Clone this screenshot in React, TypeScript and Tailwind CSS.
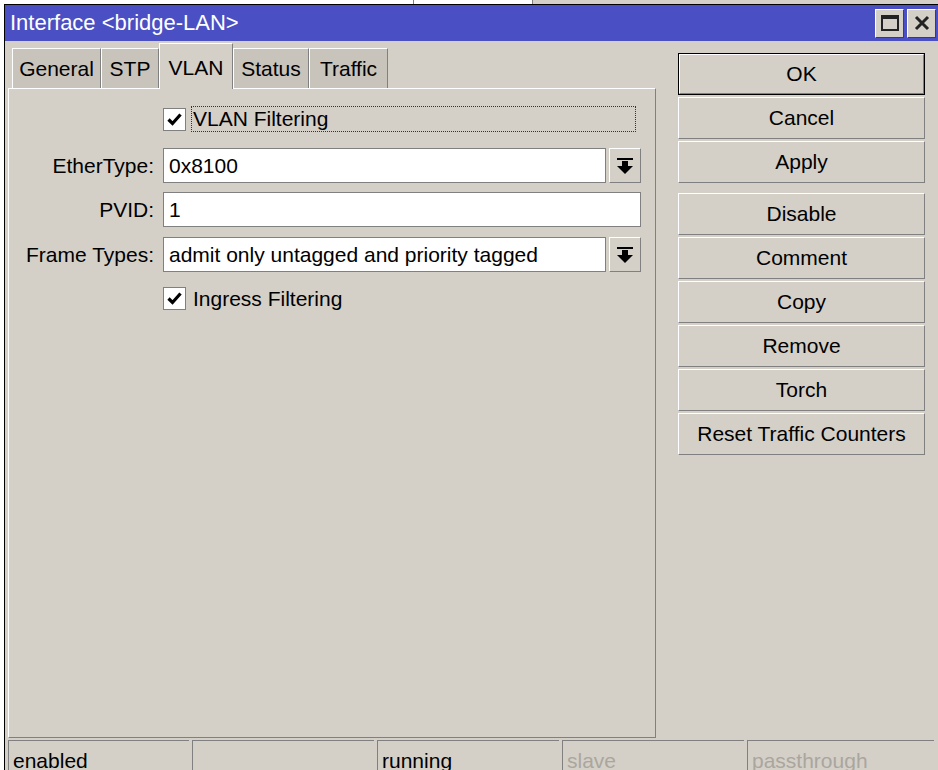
import React from "react";

const font = { fontFamily: '"Liberation Sans", Arial, sans-serif' };

const tabs = [
  { name: "General", w: "w-[89px]" },
  { name: "STP", w: "w-[58px]" },
  { name: "VLAN", w: "w-[74px]" },
  { name: "Status", w: "w-[76px]" },
  { name: "Traffic", w: "w-[79px]" },
];

const buttons = [
  ["OK", "Cancel", "Apply"],
  ["Disable", "Comment", "Copy", "Remove", "Torch", "Reset Traffic Counters"],
];

const statusCells = [
  { text: "enabled", dim: false, w: "w-[181px]" },
  { text: "", dim: false, w: "w-[182px]" },
  { text: "running", dim: false, w: "w-[182px]" },
  { text: "slave", dim: true, w: "w-[182px]" },
  { text: "passthrough", dim: true, w: "w-[187px]" },
];

const Check = () => (
  <span className="flex items-center justify-center w-[23px] h-[23px] bg-white border border-[#808080] shrink-0">
    <svg width="17" height="17" viewBox="0 0 17 17">
      <path d="M2.5 8.5 L6.5 12.5 L14.5 3.5" stroke="#000" strokeWidth="3.2" fill="none" />
    </svg>
  </span>
);

const DropButton = () => (
  <span className="flex items-center justify-center w-[32px] h-[35px] ml-[3px] bg-[#d4d0c8] border border-t-white border-l-white border-r-[#808080] border-b-[#808080] shrink-0">
    <svg width="16" height="16" viewBox="0 0 16 16">
      <rect x="0" y="0" width="16" height="2" fill="#000" />
      <rect x="5" y="3" width="6" height="5" fill="#000" />
      <polygon points="0,8 16,8 8,16" fill="#000" />
    </svg>
  </span>
);

const Field = ({ label, value, drop, mt }: { label: string; value: string; drop?: boolean; mt: string }) => (
  <div className={`flex items-center ${mt}`}>
    <span className="w-[146px] text-right pr-[1px] text-[21px] text-black">{label}</span>
    <div className="flex ml-[8px] w-[478px]">
      <span className="flex-1 h-[35px] bg-white border border-[#808080] flex items-center pl-[5px] text-[21px] text-black">
        {value}
      </span>
      {drop && <DropButton />}
    </div>
  </div>
);

export default function App() {
  return (
    <div className="w-[938px] h-[770px] overflow-hidden bg-white relative" style={font}>
      {/* window behind */}
      <div className="absolute top-0 left-[532px] w-[406px] h-[4px] bg-[#d4d0c8] border-l border-[#808080]" />
      <div className="absolute top-0 left-[413px] w-[1px] h-[4px] bg-[#808080]" />

      <div className="absolute left-[4px] top-[4px] w-[940px] h-[770px] border-l border-t border-black bg-[#d4d0c8] flex flex-col">
        {/* title bar */}
        <div className="h-[36px] bg-[#4a4fc3] flex items-center justify-between shrink-0">
          <span className="pl-[5px] text-[22px] text-white leading-none">Interface &lt;bridge-LAN&gt;</span>
          <div className="flex gap-[3px] mr-[8px]">
            <span className="w-[29px] h-[29px] bg-[#d4d0c8] border border-t-white border-l-white border-r-[#404040] border-b-[#404040] flex items-center justify-center">
              <span className="w-[18px] h-[16px] border-2 border-t-[4px] border-[#222]" />
            </span>
            <span className="w-[29px] h-[29px] bg-[#d4d0c8] border border-t-white border-l-white border-r-[#404040] border-b-[#404040] flex items-center justify-center">
              <svg width="16" height="16" viewBox="0 0 16 16">
                <path d="M2 2 L14 14 M14 2 L2 14" stroke="#222" strokeWidth="3" />
              </svg>
            </span>
          </div>
        </div>

        <div className="flex flex-1">
          {/* left: tabs + panel */}
          <div className="w-[651px] pl-[3px] pt-[2px] flex flex-col">
            <div className="flex items-end h-[45px] pl-[4px]">
              {tabs.map((t) =>
                t.name === "VLAN" ? (
                  <span
                    key={t.name}
                    className={`${t.w} h-[46px] -mb-[1px] relative z-10 bg-[#d4d0c8] border border-b-0 border-t-white border-l-white border-r-[#808080] pt-[8px] text-center text-[21px] text-black`}
                  >
                    {t.name}
                  </span>
                ) : (
                  <span
                    key={t.name}
                    className={`${t.w} h-[40px] bg-[#c8c4bc] border border-b-0 border-t-white border-l-white border-r-[#808080] flex items-center justify-center text-[21px] text-black`}
                  >
                    {t.name}
                  </span>
                )
              )}
            </div>
            <div className="h-[650px] border border-t-white border-l-white border-r-[#808080] border-b-[#808080] flex flex-col pt-[17px]">
              <div className="flex items-center ml-[154px]">
                <Check />
                <span className="ml-[5px] w-[445px] h-[26px] border border-dotted border-[#333] flex items-center pl-[1px] text-[21px] text-black">
                  VLAN Filtering
                </span>
              </div>
              <Field label="EtherType:" value="0x8100" drop mt="mt-[16px]" />
              <Field label="PVID:" value="1" mt="mt-[9px]" />
              <Field label="Frame Types:" value="admit only untagged and priority tagged" drop mt="mt-[10px]" />
              <div className="flex items-center ml-[154px] mt-[11px]">
                <Check />
                <span className="ml-[7px] text-[21px] text-black">Ingress Filtering</span>
              </div>
            </div>
          </div>

          {/* right: buttons */}
          <div className="ml-[22px] pt-[12px] w-[247px] flex flex-col">
            {buttons.map((group, gi) => (
              <div key={gi} className={`flex flex-col gap-[2px] ${gi ? "mt-[10px]" : ""}`}>
                {group.map((b) =>
                  b === "OK" ? (
                    <span key={b} className="h-[42px] border border-black flex">
                      <span className="flex-1 border border-t-white border-l-white border-r-[#808080] border-b-[#808080] flex items-center justify-center text-[21px] text-black">
                        {b}
                      </span>
                    </span>
                  ) : (
                    <span
                      key={b}
                      className="h-[42px] border border-t-white border-l-white border-r-[#808080] border-b-[#808080] flex items-center justify-center text-[21px] text-black"
                    >
                      {b}
                    </span>
                  )
                )}
              </div>
            ))}
          </div>
        </div>

        {/* status bar */}
        <div className="flex gap-[3px] pl-[3px] mt-[2px] h-[40px] shrink-0">
          {statusCells.map((c, i) => (
            <span
              key={i}
              className={`${c.w} border-t border-l border-[#808080] pl-[4px] pt-[4px] text-[21px] ${c.dim ? "text-[#aaa69e]" : "text-black"}`}
            >
              {c.text}
            </span>
          ))}
        </div>
      </div>
    </div>
  );
}
